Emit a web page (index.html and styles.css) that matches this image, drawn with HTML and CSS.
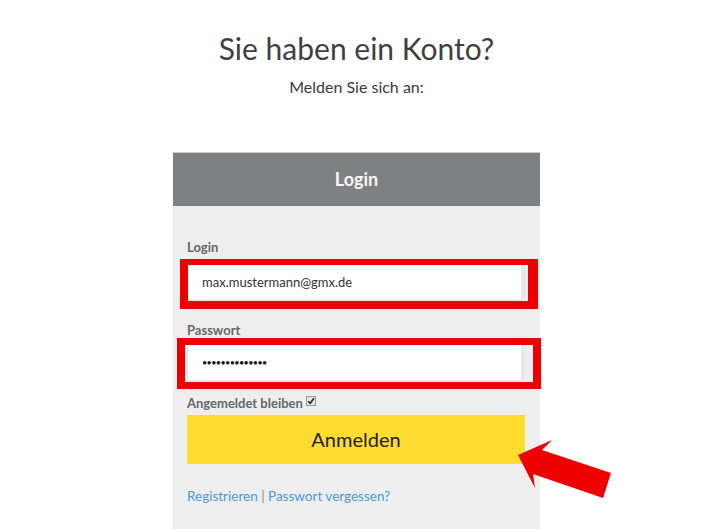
FILE: index.html
```html
<!DOCTYPE html>
<html lang="de">
<head>
<meta charset="utf-8">
<title>Login</title>
<link rel="stylesheet" href="styles.css">
</head>
<body>
<div class="page">
  <h1 class="title">Sie haben ein Konto?</h1>
  <p class="subtitle">Melden Sie sich an:</p>
  <div class="panel">
    <div class="panel-head">Login</div>
    <div class="panel-body">
      <div class="label label-login">Login</div>
      <div class="field">
        <div class="input">max.mustermann@gmx.de</div>
        <div class="mark mark-login"></div>
      </div>
      <div class="label label-pass">Passwort</div>
      <div class="field">
        <div class="input input-pass">••••••••••••••</div>
        <div class="mark mark-pass"></div>
      </div>
      <div class="remember">Angemeldet bleiben
        <svg class="check" width="10" height="10" viewBox="0 0 10 10"><rect x="0.5" y="0.5" width="9" height="9" fill="#e4e4e4" stroke="#9a9a9a"/><path d="M2.2 5.2 L4.2 7.3 L8 2.3" fill="none" stroke="#222" stroke-width="1.5"/></svg>
      </div>
      <div class="btn-wrap">
        <div class="button">Anmelden</div>
        <svg class="arrow" width="96" height="62" viewBox="0 0 96 62"><polygon points="0,16 34,1 24,11 93,34 85,59 15,35 17,49" fill="#ee0000"/></svg>
      </div>
      <div class="links"><span class="link">Registrieren</span> <span class="sep">|</span> <span class="link">Passwort vergessen?</span></div>
    </div>
  </div>
</div>
</body>
</html>
```

FILE: styles.css
```css
html, body {
  margin: 0;
  padding: 0;
  background: #ffffff;
  height: 100%;
}
body {
  font-family: Lato, "Open Sans", "Liberation Sans", sans-serif;
  color: #444;
  overflow: hidden;
}
.page {
  width: 367px;
  margin-left: 173px;
}
.title {
  margin: 0;
  padding-top: 30px;
  font-size: 30px;
  line-height: 36px;
  font-weight: 400;
  text-align: center;
  color: #3f3f3f;
}
.subtitle {
  margin: 10px 0 0;
  font-size: 16px;
  line-height: 22px;
  text-align: center;
  color: #3a3a3a;
}
.panel {
  margin-top: 54px;
  background: #eeeeee;
  min-height: 400px;
}
.panel-head {
  height: 54px;
  background: #7f8081;
  border-top: 1px solid #c9c9c9;
  box-sizing: border-box;
  color: #f6f6f6;
  font-weight: 700;
  font-size: 18px;
  line-height: 53px;
  text-align: center;
}
.panel-body {
  padding: 33px 15px 0 14px;
}
.label {
  font-size: 13px;
  font-weight: 700;
  line-height: 16px;
  color: #666;
}
.label-login {
  margin-bottom: 8px;
}
.label-pass {
  margin-top: 21px;
  margin-bottom: 6px;
}
.field {
  position: relative;
}
.input {
  height: 38px;
  box-sizing: border-box;
  background: #fff;
  border: 1px solid #e8e8e8;
  border-right-width: 4px;
  border-bottom-width: 2px;
  padding-left: 14px;
  font-size: 13px;
  line-height: 36px;
  color: #333;
}
.input-pass {
  font-size: 9px;
  letter-spacing: -0.6px;
  color: #111;
}
.mark {
  position: absolute;
  border: solid #ee0000;
  pointer-events: none;
}
.mark-login {
  left: -7px;
  top: -4px;
  right: -13px;
  bottom: -8px;
  border-width: 6px 10px 8px 8px;
}
.mark-pass {
  left: -10px;
  top: -6px;
  right: -16px;
  bottom: -7px;
  border-width: 7px 8px 7px 8px;
}
.remember {
  margin-top: 13px;
  font-size: 13px;
  font-weight: 700;
  line-height: 16px;
  color: #666;
  display: flex;
  align-items: center;
  gap: 3px;
}
.check {
  margin-top: -4px;
}
.btn-wrap {
  position: relative;
  margin-top: 4px;
}
.button {
  height: 49px;
  background: #fddc2f;
  color: #222;
  font-size: 20px;
  line-height: 49px;
  text-align: center;
}
.arrow {
  position: absolute;
  left: 331px;
  top: 24px;
}
.links {
  margin-top: 23px;
  font-size: 13.5px;
  line-height: 18px;
  color: #777;
}
.link {
  color: #4a9ad6;
}
.sep {
  color: #888;
}
```
